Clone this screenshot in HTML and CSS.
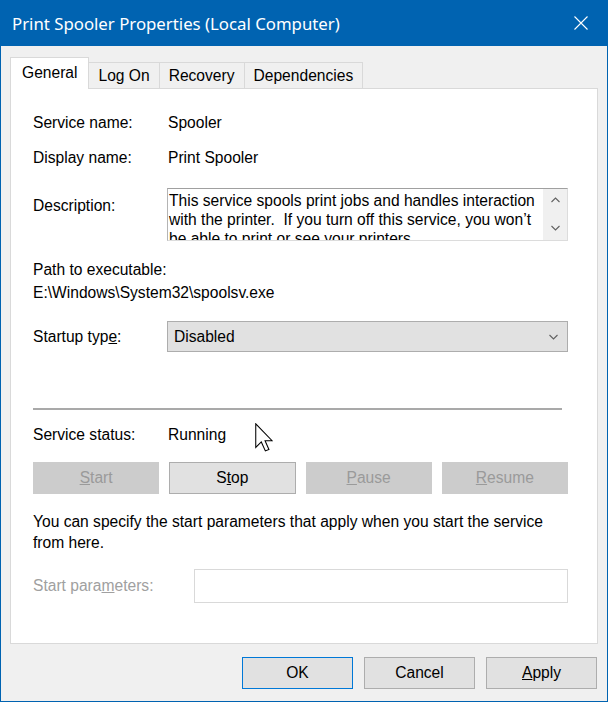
FILE: index.html
```html
<!DOCTYPE html>
<html lang="en">
<head>
  <meta charset="UTF-8">
  <title>Print Spooler Properties (Local Computer)</title>
  <link rel="stylesheet" href="styles.css">
</head>
<body>
  <div class="window">
    <!-- title bar -->
    <div class="titlebar">
      <span class="title">Print Spooler Properties (Local Computer)</span>
      <svg class="close" width="14" height="14" viewBox="0 0 14 14">
        <path d="M0.5 0.5 L13.5 13.5 M13.5 0.5 L0.5 13.5" stroke="#fff" stroke-width="1.1" fill="none"/>
      </svg>
    </div>

    <!-- tabs -->
    <div class="tabs">
      <span class="tab active">General</span>
      <span class="tab">Log On</span>
      <span class="tab">Recovery</span>
      <span class="tab">Dependencies</span>
    </div>

    <div class="panel">
      <div class="field">
        <span class="label">Service name:</span>
        <span class="value">Spooler</span>
      </div>
      <div class="field mt15">
        <span class="label">Display name:</span>
        <span class="value">Print Spooler</span>
      </div>
      <div class="field desc-row">
        <span class="label desc-label">Description:</span>
        <div class="desc-box">
          <div class="desc-text">This service spools print jobs and handles interaction with the printer.&nbsp; If you turn off this service, you won’t be able to print or see your printers.</div>
          <div class="scrollbar">
            <svg width="9" height="6" viewBox="0 0 9 6"><path d="M0.5 5 L4.5 1 L8.5 5" stroke="#606060" stroke-width="1.1" fill="none"/></svg>
            <svg width="9" height="6" viewBox="0 0 9 6"><path d="M0.5 1 L4.5 5 L8.5 1" stroke="#606060" stroke-width="1.1" fill="none"/></svg>
          </div>
        </div>
      </div>

      <div class="path">
        <div>Path to executable:</div>
        <div>E:\Windows\System32\spoolsv.exe</div>
      </div>

      <div class="field startup">
        <span class="label">Startup typ<u>e</u>:</span>
        <div class="select">
          <span>Disabled</span>
          <svg width="9" height="6" viewBox="0 0 9 6"><path d="M0.5 1 L4.5 5 L8.5 1" stroke="#606060" stroke-width="1.1" fill="none"/></svg>
        </div>
      </div>

      <div class="separator"></div>

      <div class="field status">
        <span class="label">Service status:</span>
        <span class="value">Running</span>
      </div>

      <div class="service-buttons">
        <button class="btn" disabled><u>S</u>tart</button>
        <button class="btn">S<u>t</u>op</button>
        <button class="btn" disabled><u>P</u>ause</button>
        <button class="btn" disabled><u>R</u>esume</button>
      </div>

      <p class="info">You can specify the start parameters that apply when you start the service<br>from here.</p>

      <div class="field params">
        <span class="label params-label">Start para<u>m</u>eters:</span>
        <div class="params-input"></div>
      </div>
    </div>

    <div class="footer">
      <button class="btn dlg default">OK</button>
      <button class="btn dlg">Cancel</button>
      <button class="btn dlg"><u>A</u>pply</button>
    </div>

    <!-- mouse pointer -->
    <svg class="cursor" width="18" height="29" viewBox="0 0 12 19.3">
      <path d="M0.5 0.5 L0.5 16.3 L4.2 12.6 L6.9 18.6 L9.3 17.6 L6.7 11.8 L11.4 11.8 Z" fill="#fff" stroke="#000" stroke-width="0.7" stroke-linejoin="miter"/>
    </svg>
  </div>
</body>
</html>
```

FILE: styles.css
```css
body {
    margin: 0;
    font-family: "Liberation Sans", Arial, sans-serif;
    font-size: 15.6px;
    color: #000;
}
.window {
    position: relative;
    width: 608px;
    height: 702px;
    box-sizing: border-box;
    border: 1px solid #0063b1;
    border-top: none;
    background: #f0f0f0;
}
.titlebar {
    height: 46px;
    background: #0063b1;
    color: #fff;
    display: flex;
    align-items: center;
    justify-content: space-between;
    padding: 0 19px 0 11px;
}
.title {
    font-family: "Noto Sans", sans-serif;
    font-size: 16.8px;
}

/* tabs */
.tabs {
    display: flex;
    align-items: flex-end;
    height: 31px;
    margin: 11px 0 0 9px;
}
.tab {
    height: 25px;
    line-height: 25px;
    padding: 0 9px;
    border-top: 1px solid #d9d9d9;
    border-right: 1px solid #d9d9d9;
    background: #f0f0f0;
}
.tab.active {
    position: relative;
    z-index: 1;
    height: 31px;
    line-height: 30px;
    padding: 0 11px;
    margin-bottom: -1px;
    border-left: 1px solid #d9d9d9;
    background: #fff;
}

/* general page */
.panel {
    height: 556px;
    box-sizing: border-box;
    margin: 0 9px;
    padding: 24px 29px 0 22px;
    border: 1px solid #d9d9d9;
    background: #fff;
}
.field {
    display: flex;
    align-items: center;
    line-height: 20px;
}
.label {
    width: 134px;
    flex: none;
}
.value {
    padding-left: 1px;
}
.mt15 {
    margin-top: 15px;
}
.desc-row {
    align-items: flex-start;
    margin-top: 20px;
}
.desc-label {
    padding-top: 8px;
}
.desc-box {
    flex: 1;
    display: flex;
    height: 53px;
    box-sizing: border-box;
    border: 1px solid #dcdcdc;
    border-top-color: #a0a0a0;
    border-left-color: #b4b4b4;
}
.desc-text {
    flex: 1;
    padding: 2px 0 0 1px;
    line-height: 19px;
    overflow: hidden;
}
.scrollbar {
    width: 24px;
    flex: none;
    display: flex;
    flex-direction: column;
    justify-content: space-between;
    align-items: center;
    padding: 8px 0 9px;
    background: #f0f0f0;
}
.scrollbar svg {
    display: block;
}
.path {
    margin-top: 17px;
    line-height: 23px;
}
.startup {
    margin-top: 17px;
}
.select {
    flex: 1;
    height: 31px;
    box-sizing: border-box;
    display: flex;
    align-items: center;
    justify-content: space-between;
    padding: 0 9px 0 6px;
    border: 1px solid #adadad;
    background: #e1e1e1;
}
.separator {
    height: 2px;
    margin: 56px 6px 0 0;
    background: #a9a9a9;
}
.status {
    margin-top: 15px;
}

.service-buttons {
    display: grid;
    grid-template-columns: repeat(4, 1fr);
    gap: 10px;
    margin-top: 17px;
}
.btn {
    height: 32px;
    box-sizing: border-box;
    padding: 0;
    border: 1px solid #adadad;
    background: #e1e1e1;
    font-family: inherit;
    font-size: 15.6px;
    color: #000;
}
.btn:disabled {
    border-color: #cccccc;
    background: #cccccc;
    color: #9a9a9a;
}
.info {
    margin: 17px 0 0;
    line-height: 21px;
}
.params {
    margin-top: 16px;
}
.params-label {
    width: 161px;
    color: #a0a0a0;
}
.params-input {
    flex: 1;
    height: 34px;
    box-sizing: border-box;
    border: 1px solid #d9d9d9;
}

/* OK / Cancel / Apply */
.footer {
    display: flex;
    justify-content: flex-end;
    gap: 11px;
    padding: 13px 10px 0 0;
}
.dlg {
    width: 111px;
}
.dlg.default {
    border-color: #0078d7;
}

.cursor {
    position: absolute;
    left: 254px;
    top: 423px;
}
```
